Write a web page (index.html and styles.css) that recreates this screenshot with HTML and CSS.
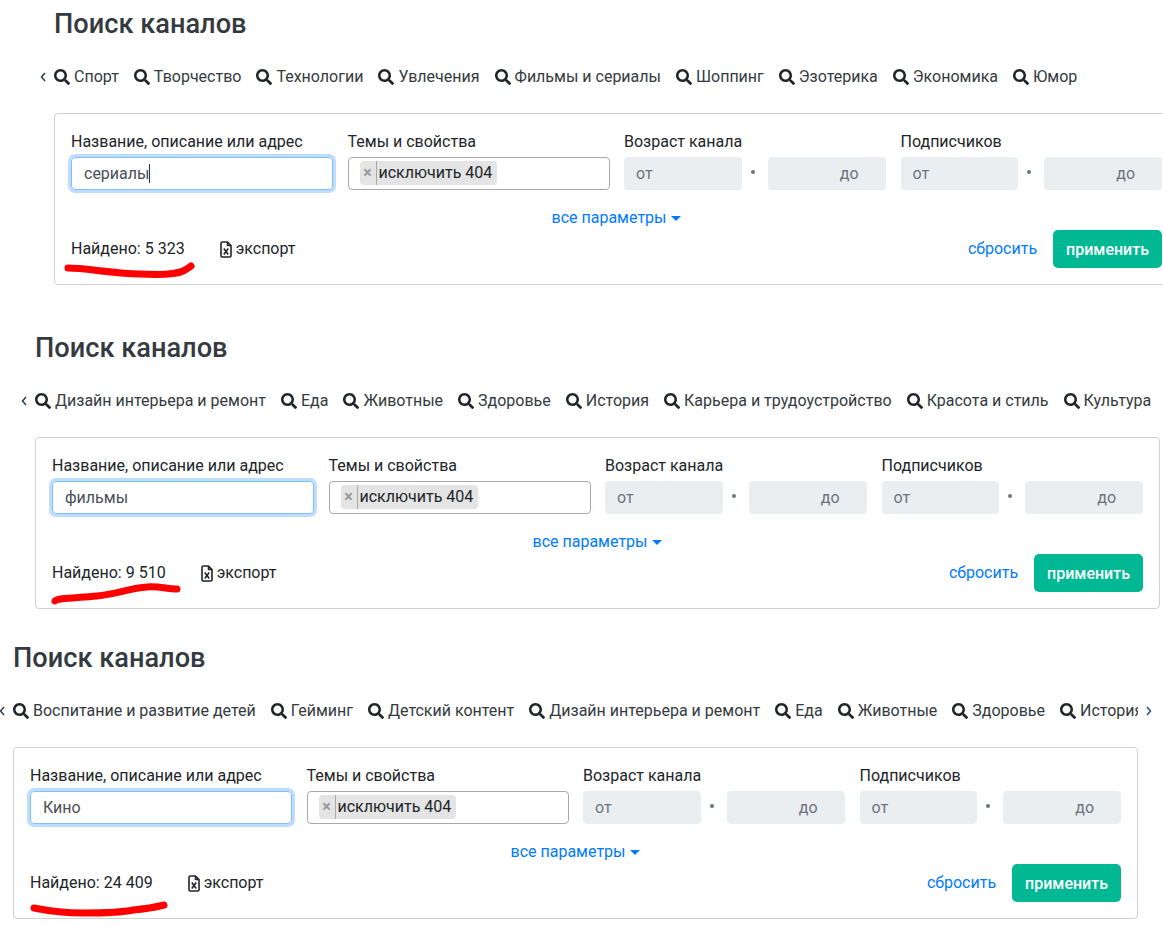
FILE: index.html
```html
<!DOCTYPE html>
<html lang="ru">
<head>
    <meta charset="UTF-8">
    <meta name="viewport" content="width=device-width, initial-scale=1.0">
    <title>Поиск каналов</title>
    <link rel="stylesheet" href="styles.css">
</head>
<body>
    <svg class="icon-defs" width="0" height="0">
        <symbol id="icon-search" viewBox="0 0 512 512">
            <path d="M505 442.7L405.3 343c-4.5-4.5-10.6-7-17-7H372c27.6-35.3 44-79.7 44-128C416 93.1 322.9 0 208 0S0 93.1 0 208s93.1 208 208 208c48.3 0 92.7-16.4 128-44v16.3c0 6.4 2.5 12.5 7 17l99.7 99.7c9.4 9.4 24.6 9.4 33.9 0l28.3-28.3c9.4-9.4 9.4-24.6.1-34zM208 336c-70.7 0-128-57.2-128-128 0-70.7 57.2-128 128-128 70.7 0 128 57.2 128 128 0 70.7-57.2 128-128 128z"/>
        </symbol>
        <symbol id="icon-xls" viewBox="0 0 12 17">
            <path d="M1 2.2C1 1.5 1.5 1 2.2 1H7.5L11 4.5V14.8C11 15.5 10.5 16 9.8 16H2.2C1.5 16 1 15.5 1 14.8Z M7.5 1V4.5H11" fill="none" stroke="currentColor" stroke-width="1.6" stroke-linejoin="round"/>
            <path d="M3.8 7.6L8.2 13.4M8.2 7.6L3.8 13.4" fill="none" stroke="currentColor" stroke-width="1.6"/>
        </symbol>
    </svg>

    <section class="search-block block-first">
        <h1>Поиск каналов</h1>
        <div class="tabs">
            <svg class="chevron chevron-left" viewBox="0 0 6 10"><path d="M5 1L1.5 5L5 9"/></svg>
            <div class="tabs-track">
                <a class="tab"><svg class="icon-search"><use href="#icon-search"/></svg>Спорт</a>
                <a class="tab"><svg class="icon-search"><use href="#icon-search"/></svg>Творчество</a>
                <a class="tab"><svg class="icon-search"><use href="#icon-search"/></svg>Технологии</a>
                <a class="tab"><svg class="icon-search"><use href="#icon-search"/></svg>Увлечения</a>
                <a class="tab"><svg class="icon-search"><use href="#icon-search"/></svg>Фильмы и сериалы</a>
                <a class="tab"><svg class="icon-search"><use href="#icon-search"/></svg>Шоппинг</a>
                <a class="tab"><svg class="icon-search"><use href="#icon-search"/></svg>Эзотерика</a>
                <a class="tab"><svg class="icon-search"><use href="#icon-search"/></svg>Экономика</a>
                <a class="tab"><svg class="icon-search"><use href="#icon-search"/></svg>Юмор</a>
            </div>
        </div>
        <div class="panel">
            <div class="fields">
                <div class="field">
                    <label>Название, описание или адрес</label>
                    <div class="text-input">сериалы<span class="text-caret"></span></div>
                </div>
                <div class="field">
                    <label>Темы и свойства</label>
                    <div class="tag-input"><span class="tag"><span class="tag-remove">×</span><span class="tag-text">исключить 404</span></span></div>
                </div>
                <div class="field">
                    <label>Возраст канала</label>
                    <div class="range"><input class="range-from" placeholder="от"><span class="range-dot"></span><input class="range-to" placeholder="до"></div>
                </div>
                <div class="field">
                    <label>Подписчиков</label>
                    <div class="range"><input class="range-from" placeholder="от"><span class="range-dot"></span><input class="range-to" placeholder="до"></div>
                </div>
            </div>
            <div class="more"><a class="link">все параметры<span class="caret-down"></span></a></div>
            <div class="panel-footer">
                <span class="found">Найдено: 5 323</span>
                <a class="export"><svg class="icon-xls"><use href="#icon-xls"/></svg>экспорт</a>
                <a class="link reset">сбросить</a>
                <button class="apply">применить</button>
            </div>
            <svg class="scribble" viewBox="0 0 200 40"><path d="M13 19C30 19 55 24 85 25C105 26 122 25 128 22C132 20 135 18 136 17"/></svg>
        </div>
    </section>

    <section class="search-block block-second">
        <h1>Поиск каналов</h1>
        <div class="tabs">
            <svg class="chevron chevron-left" viewBox="0 0 6 10"><path d="M5 1L1.5 5L5 9"/></svg>
            <div class="tabs-track">
                <a class="tab"><svg class="icon-search"><use href="#icon-search"/></svg>Дизайн интерьера и ремонт</a>
                <a class="tab"><svg class="icon-search"><use href="#icon-search"/></svg>Еда</a>
                <a class="tab"><svg class="icon-search"><use href="#icon-search"/></svg>Животные</a>
                <a class="tab"><svg class="icon-search"><use href="#icon-search"/></svg>Здоровье</a>
                <a class="tab"><svg class="icon-search"><use href="#icon-search"/></svg>История</a>
                <a class="tab"><svg class="icon-search"><use href="#icon-search"/></svg>Карьера и трудоустройство</a>
                <a class="tab"><svg class="icon-search"><use href="#icon-search"/></svg>Красота и стиль</a>
                <a class="tab"><svg class="icon-search"><use href="#icon-search"/></svg>Культура</a>
            </div>
        </div>
        <div class="panel">
            <div class="fields">
                <div class="field">
                    <label>Название, описание или адрес</label>
                    <div class="text-input">фильмы</div>
                </div>
                <div class="field">
                    <label>Темы и свойства</label>
                    <div class="tag-input"><span class="tag"><span class="tag-remove">×</span><span class="tag-text">исключить 404</span></span></div>
                </div>
                <div class="field">
                    <label>Возраст канала</label>
                    <div class="range"><input class="range-from" placeholder="от"><span class="range-dot"></span><input class="range-to" placeholder="до"></div>
                </div>
                <div class="field">
                    <label>Подписчиков</label>
                    <div class="range"><input class="range-from" placeholder="от"><span class="range-dot"></span><input class="range-to" placeholder="до"></div>
                </div>
            </div>
            <div class="more"><a class="link">все параметры<span class="caret-down"></span></a></div>
            <div class="panel-footer">
                <span class="found">Найдено: 9 510</span>
                <a class="export"><svg class="icon-xls"><use href="#icon-xls"/></svg>экспорт</a>
                <a class="link reset">сбросить</a>
                <button class="apply">применить</button>
            </div>
            <svg class="scribble" viewBox="0 0 200 40"><path d="M19 28C20 25 40 25 61 23C80 21 95 15 111 14C122 13 132 16 141 16"/></svg>
        </div>
    </section>

    <section class="search-block block-third">
        <h1>Поиск каналов</h1>
        <div class="tabs">
            <svg class="chevron chevron-left" viewBox="0 0 6 10"><path d="M5 1L1.5 5L5 9"/></svg>
            <div class="tabs-track">
                <a class="tab"><svg class="icon-search"><use href="#icon-search"/></svg>Воспитание и развитие детей</a>
                <a class="tab"><svg class="icon-search"><use href="#icon-search"/></svg>Гейминг</a>
                <a class="tab"><svg class="icon-search"><use href="#icon-search"/></svg>Детский контент</a>
                <a class="tab"><svg class="icon-search"><use href="#icon-search"/></svg>Дизайн интерьера и ремонт</a>
                <a class="tab"><svg class="icon-search"><use href="#icon-search"/></svg>Еда</a>
                <a class="tab"><svg class="icon-search"><use href="#icon-search"/></svg>Животные</a>
                <a class="tab"><svg class="icon-search"><use href="#icon-search"/></svg>Здоровье</a>
                <a class="tab"><svg class="icon-search"><use href="#icon-search"/></svg>История</a>
            </div>
            <svg class="chevron chevron-right" viewBox="0 0 6 10"><path d="M1 1L4.5 5L1 9"/></svg>
        </div>
        <div class="panel">
            <div class="fields">
                <div class="field">
                    <label>Название, описание или адрес</label>
                    <div class="text-input">Кино</div>
                </div>
                <div class="field">
                    <label>Темы и свойства</label>
                    <div class="tag-input"><span class="tag"><span class="tag-remove">×</span><span class="tag-text">исключить 404</span></span></div>
                </div>
                <div class="field">
                    <label>Возраст канала</label>
                    <div class="range"><input class="range-from" placeholder="от"><span class="range-dot"></span><input class="range-to" placeholder="до"></div>
                </div>
                <div class="field">
                    <label>Подписчиков</label>
                    <div class="range"><input class="range-from" placeholder="от"><span class="range-dot"></span><input class="range-to" placeholder="до"></div>
                </div>
            </div>
            <div class="more"><a class="link">все параметры<span class="caret-down"></span></a></div>
            <div class="panel-footer">
                <span class="found">Найдено: 24 409</span>
                <a class="export"><svg class="icon-xls"><use href="#icon-xls"/></svg>экспорт</a>
                <a class="link reset">сбросить</a>
                <button class="apply">применить</button>
            </div>
            <svg class="scribble" viewBox="0 0 200 40"><path d="M20 25C35 28 50 30 69 30C90 30 110 29 119 27C130 26 142 24 150 22"/></svg>
        </div>
    </section>
</body>
</html>
```

FILE: styles.css
```css
* {
    box-sizing: border-box;
}

html,
body {
    height: 100%;
}

body {
    margin: 0;
    overflow: hidden;
    background-color: #fff;
    color: #212529;
    font-family: Roboto, "Liberation Sans", sans-serif;
    font-size: 16px;
    line-height: 24px;
}

.icon-defs {
    position: absolute;
}

.search-block {
    width: 1125px;
}

.block-first {
    margin-left: 54px;
    padding-top: 9px;
}

.block-second {
    margin-left: 35px;
    padding-top: 48px;
}

.block-third {
    margin-left: 13px;
    padding-top: 34px;
}

h1 {
    margin: 0 0 26px;
    color: #343a40;
    font-size: 27.2px;
    font-weight: 500;
    line-height: 30px;
}

.tabs {
    position: relative;
    margin-bottom: 24px;
}

.tabs-track {
    display: flex;
    gap: 15px;
    overflow: hidden;
    white-space: nowrap;
}

.tab {
    display: flex;
    flex-shrink: 0;
    align-items: center;
    gap: 4px;
    color: #343a40;
}

.icon-search {
    width: 16px;
    height: 16px;
    fill: #212529;
}

.chevron {
    position: absolute;
    top: 7px;
    width: 6px;
    height: 10px;
    fill: none;
    stroke-width: 1.5;
}

.chevron-left {
    left: -14px;
    stroke: #2b3a4a;
}

.chevron-right {
    left: 1133px;
    stroke: #1d4f86;
}

.panel {
    position: relative;
    padding: 16px;
    border: 1px solid #ced0d2;
    border-radius: 4px;
}

.fields {
    display: grid;
    grid-template-columns: repeat(4, 1fr);
    gap: 15px;
}

.field label {
    display: block;
    margin-bottom: 3px;
}

.text-input {
    display: flex;
    align-items: center;
    height: 33px;
    padding: 0 12px;
    border: 1px solid #80bdff;
    border-radius: 4px;
    box-shadow: 0 0 0 3px rgba(0, 123, 255, 0.25);
    color: #495057;
}

.text-caret {
    width: 1px;
    height: 19px;
    background-color: #333;
}

.tag-input {
    display: flex;
    align-items: center;
    height: 33px;
    margin-right: -0.5px;
    padding: 0 11px;
    border: 1px solid #a9a9a9;
    border-radius: 4px;
}

.tag {
    display: flex;
    align-items: center;
    height: 24px;
    margin-bottom: 1px;
    padding-right: 5px;
    border-radius: 4px;
    background-color: #e4e4e4;
}

.tag-remove {
    width: 17px;
    border-right: 1px solid #aaa;
    color: #999;
    font-size: 16px;
    font-weight: 700;
    line-height: 24px;
    text-align: center;
}

.tag-text {
    padding-left: 2px;
}

.range {
    display: grid;
    grid-template-columns: 1fr 26px 1fr;
    align-items: center;
}

.range input {
    width: 100%;
    height: 33px;
    border: 0;
    border-radius: 4px;
    background-color: #ebeef0;
    font-family: inherit;
    font-size: 16px;
}

.range input::placeholder {
    color: #6c757d;
    opacity: 1;
}

.range-from {
    padding: 0 12px;
}

.range-to {
    padding: 0 27px 0 12px;
    text-align: right;
}

.range-dot {
    width: 4px;
    height: 4px;
    margin: 0 0 4px 9px;
    border-radius: 50%;
    background-color: #6c757d;
}

.more {
    margin-top: 16px;
    text-align: center;
}

.link {
    color: #007bff;
}

.caret-down {
    display: inline-block;
    margin-left: 5px;
    border-top: 5px solid #007bff;
    border-right: 5px solid transparent;
    border-left: 5px solid transparent;
    vertical-align: 2px;
}

.panel-footer {
    display: flex;
    align-items: center;
    height: 38px;
}

.export {
    display: flex;
    align-items: center;
    gap: 4px;
    margin-left: 35px;
}

.icon-xls {
    width: 12px;
    height: 17px;
    color: #212529;
}

.reset {
    margin-left: auto;
}

.apply {
    height: 38px;
    margin-left: 16px;
    padding: 0 13px;
    border: 0;
    border-radius: 5px;
    background-color: #00b894;
    color: #fff;
    font-family: inherit;
    font-size: 16px;
    font-weight: 500;
}

.scribble {
    position: absolute;
    top: 135px;
    left: 0;
    width: 200px;
    height: 40px;
    overflow: visible;
    fill: none;
    stroke: #f00;
    stroke-width: 7;
    stroke-linecap: round;
    filter: blur(0.6px);
}
```
